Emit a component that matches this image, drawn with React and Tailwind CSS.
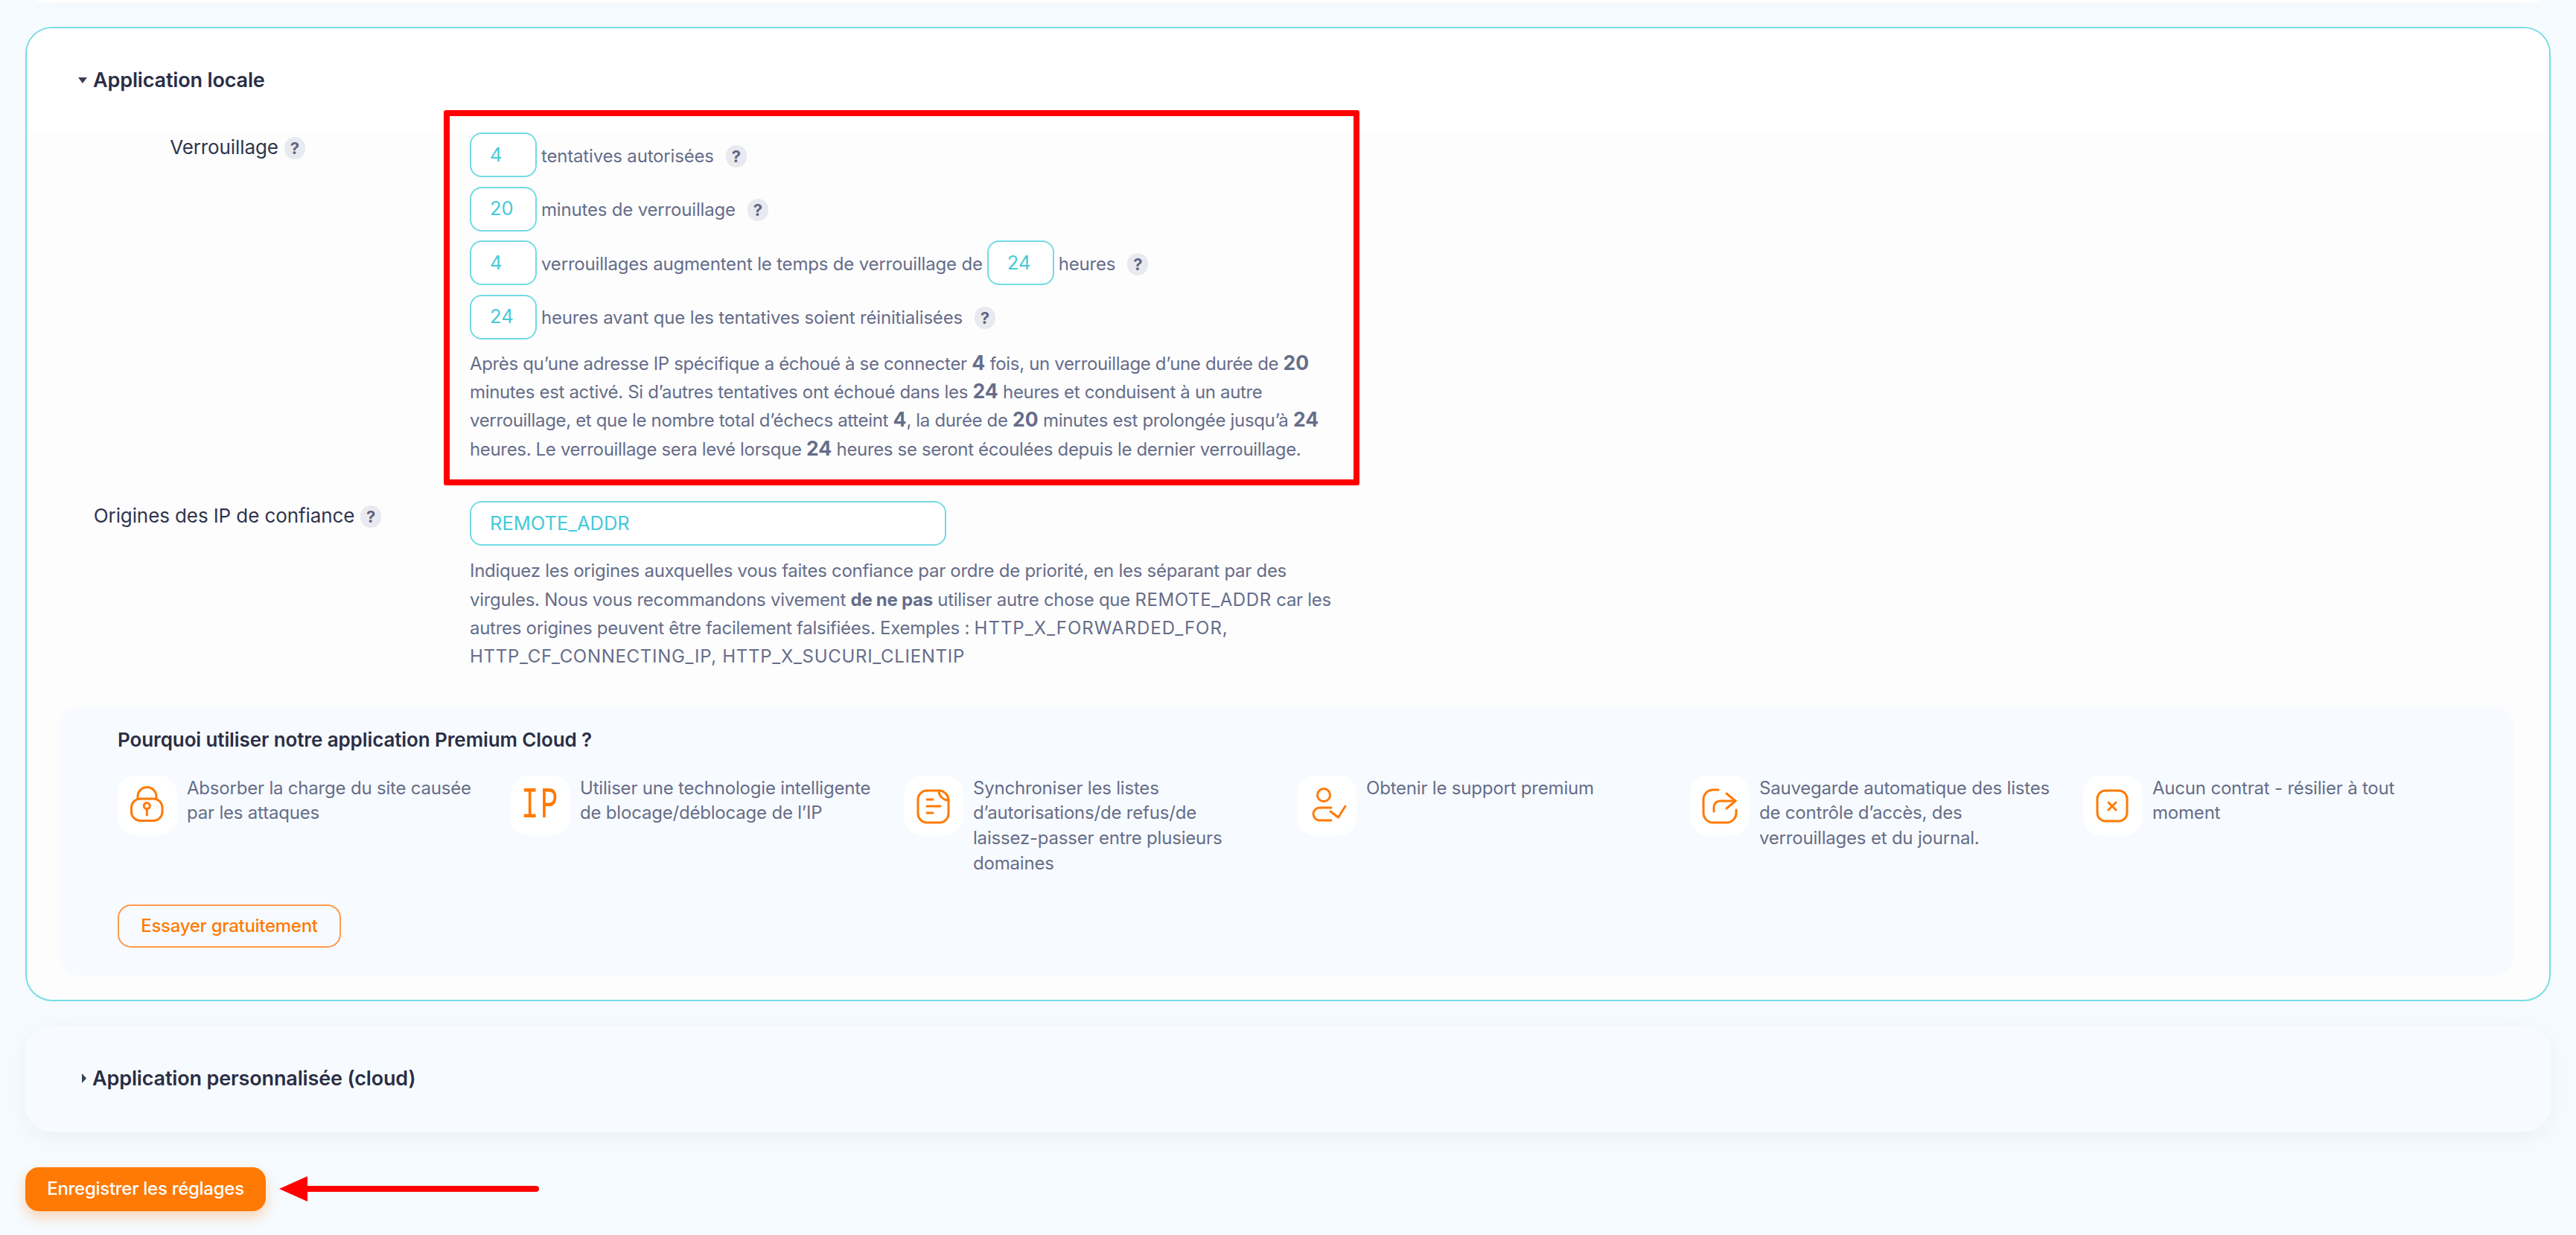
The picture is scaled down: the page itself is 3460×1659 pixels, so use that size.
import React from 'react';

const Help = ({ className = '' }) => (
  <span className={`inline-flex h-[30px] w-[28px] shrink-0 items-center justify-center rounded-full bg-[#e9eaf0] text-[22px] font-bold leading-none tracking-normal text-[#5f6580] ${className}`}>
    ?
  </span>
);

const Field = ({ value, className = 'w-[90px]' }) => (
  <span className={`flex h-[60px] shrink-0 items-center rounded-2xl border-2 border-[#72dbe3] bg-white pl-[25px] text-[25.5px] tracking-normal text-[#45c9d8] ${className}`}>
    {value}
  </span>
);

const Rule = ({ children }) => (
  <div className="flex h-[60px] items-center whitespace-nowrap tracking-[-0.18px]">{children}</div>
);

const Num = ({ children }) => <b className="text-[26.5px] leading-none tracking-normal">{children}</b>;

const icons = {
  lock: (
    <svg viewBox="0 0 80 80" className="h-20 w-20" fill="none" stroke="#ff7a05" strokeWidth="3" strokeLinecap="round">
      <rect x="18.5" y="31" width="41.5" height="29.5" rx="12" />
      <path d="M27 31V28a12.5 12.5 0 0 1 25 0V31" />
      <circle cx="39.3" cy="40.5" r="4" />
      <path d="M39.3 45V53" />
    </svg>
  ),
  doc: (
    <svg viewBox="0 0 80 80" className="h-20 w-20" fill="none" stroke="#ff7a05" strokeWidth="3" strokeLinecap="round">
      <path d="M47 20H31A12 12 0 0 0 19 32V51A12 12 0 0 0 31 63H48A12 12 0 0 0 60 51V33" />
      <path d="M47 20A13 13 0 0 0 60 33M47 20C54 20 60 26 60 33" />
      <path d="M31 32H39M31 41H49M31 50H39" />
    </svg>
  ),
  user: (
    <svg viewBox="0 0 80 80" className="h-20 w-20" fill="none" stroke="#ff7a05" strokeWidth="3" strokeLinecap="round" strokeLinejoin="round">
      <circle cx="36" cy="26" r="8.5" />
      <path d="M46 43H30.5a8.5 8.5 0 0 0 0 17H46" />
      <path d="M45 48L55.5 56L65 41" />
    </svg>
  ),
  share: (
    <svg viewBox="0 0 80 80" className="h-20 w-20" fill="none" stroke="#ff7a05" strokeWidth="3" strokeLinecap="round" strokeLinejoin="round">
      <path d="M38 19H31A13 13 0 0 0 18 32V50A13 13 0 0 0 31 63H49A13 13 0 0 0 62 50V46" />
      <path d="M49 24L61 34L49 44" />
      <path d="M61 34H40A8 8 0 0 0 32 42V48" />
    </svg>
  ),
  cross: (
    <svg viewBox="0 0 80 80" className="h-20 w-20" fill="none" stroke="#ff7a05" strokeWidth="3" strokeLinecap="round">
      <rect x="19" y="20" width="40" height="41" rx="11" />
      <path d="M34 36L44 46M44 36L34 46" />
    </svg>
  ),
};

const features = [
  { icon: icons.lock, lines: ['Absorber la charge du site causée', 'par les attaques'] },
  {
    icon: <span className="scale-x-[0.65] font-['Liberation_Mono'] text-[60px] font-normal leading-none tracking-[4px] text-[#ff7a05]">IP</span>,
    lines: ['Utiliser une technologie intelligente', 'de blocage/déblocage de l’IP'],
  },
  { icon: icons.doc, lines: ['Synchroniser les listes', 'd’autorisations/de refus/de', 'laissez-passer entre plusieurs', 'domaines'] },
  { icon: icons.user, lines: ['Obtenir le support premium'] },
  { icon: icons.share, lines: ['Sauvegarde automatique des listes', 'de contrôle d’accès, des', 'verrouillages et du journal.'] },
  { icon: icons.cross, lines: ['Aucun contrat - résilier à tout', 'moment'] },
];

export default function App() {
  return (
    <div className="h-[1659px] overflow-hidden bg-[#f6fbff] px-[34px] font-['Inter',sans-serif] text-[24px] tracking-[-0.28px] text-[#666d89]">
      {/* bottom edge of the previous card */}
      <div className="mx-[16px] h-[3px] rounded-b-3xl bg-white shadow-[0_8px_24px_rgba(90,110,140,0.08)]" />

      {/* Local application */}
      <section className="mt-[33px] overflow-hidden rounded-[36px] border-2 border-[#7adde4] bg-[#fdfdfe]">
        <div className="flex h-[140px] items-center bg-white pl-[69px]">
          <svg viewBox="0 0 12 8" className="mr-[8px] h-2 w-3" fill="#3a3f55">
            <path d="M0 0H12L6 8Z" />
          </svg>
          <h2 className="text-[27px] font-semibold tracking-[-0.15px] text-[#2a2e45]">Application locale</h2>
        </div>

        <div className="flex">
          <div className="mr-[29px] flex h-[60px] w-[566px] items-start justify-center gap-2 text-[26px] tracking-[-0.1px] text-[#30354b]">
            Verrouillage <Help className="mt-[6px]" />
          </div>
          <div className="relative">
            <div className="flex flex-col gap-[12.5px]">
              <Rule>
                <Field value="4" />
                <span className="ml-[6px] mt-[3px]">tentatives autorisées</span>
                <Help className="ml-[16px] mt-[3px]" />
              </Rule>
              <Rule>
                <Field value="20" />
                <span className="ml-[6px] mt-[3px]">minutes de verrouillage</span>
                <Help className="ml-[16px] mt-[3px]" />
              </Rule>
              <Rule>
                <Field value="4" />
                <span className="ml-[6px] mt-[3px]">verrouillages augmentent le temps de verrouillage de</span>
                <Field value="24" className="ml-[6px] w-[90px]" />
                <span className="ml-[6px] mt-[3px]">heures</span>
                <Help className="ml-[16px] mt-[3px]" />
              </Rule>
              <Rule>
                <Field value="24" />
                <span className="ml-[6px] mt-[3px]">heures avant que les tentatives soient réinitialisées</span>
                <Help className="ml-[16px] mt-[3px]" />
              </Rule>
            </div>
            <div className="mt-[14px] whitespace-nowrap leading-[38.4px] tracking-[-0.34px]">
              <div>Après qu’une adresse IP spécifique a échoué à se connecter <Num>4</Num> fois, un verrouillage d’une durée de <Num>20</Num></div>
              <div>minutes est activé. Si d’autres tentatives ont échoué dans les <Num>24</Num> heures et conduisent à un autre</div>
              <div>verrouillage, et que le nombre total d’échecs atteint <Num>4</Num>, la durée de <Num>20</Num> minutes est prolongée jusqu’à <Num>24</Num></div>
              <div>heures. Le verrouillage sera levé lorsque <Num>24</Num> heures se seront écoulées depuis le dernier verrouillage.</div>
            </div>
            {/* red annotation frame */}
            <div className="pointer-events-none absolute left-[-35px] top-[-30px] h-[504px] w-[1230px] rounded-[3px] border-[8px] border-[#ff0000]" />
          </div>
        </div>

        <div className="mt-[50px] flex">
          <div className="mr-[29px] flex w-[566px] items-start justify-center gap-2 text-[26px] tracking-[-0.1px] text-[#30354b]">
            Origines des IP de confiance <Help className="mt-[6px]" />
          </div>
          <div>
            <Field value="REMOTE_ADDR" className="w-[640px]" />
            <div className="mt-[15px] whitespace-nowrap leading-[38.4px]">
              <div>Indiquez les origines auxquelles vous faites confiance par ordre de priorité, en les séparant par des</div>
              <div>virgules. Nous vous recommandons vivement <b>de ne pas</b> utiliser autre chose que <span className="tracking-[0.6px]">REMOTE_ADDR</span> car les</div>
              <div>autres origines peuvent être facilement falsifiées. Exemples : <span className="tracking-[1px]">HTTP_X_FORWARDED_FOR,</span></div>
              <div className="tracking-[0.7px]">HTTP_CF_CONNECTING_IP, HTTP_X_SUCURI_CLIENTIP</div>
            </div>
          </div>
        </div>

        {/* Premium upsell */}
        <div className="mb-[32px] ml-[44px] mr-[47px] mt-[47px] rounded-[28px] bg-[#f7fbff] pb-[38px] pl-[78px] pt-[29px]">
          <h3 className="text-[26px] font-semibold leading-[32px] tracking-[-0.1px] text-[#2a2e45]">Pourquoi utiliser notre application Premium Cloud ?</h3>
          <div className="mt-[32px] flex h-[134px] tracking-[-0.2px]">
            {features.map((item, index) => (
              <div key={index} className="flex w-[528px] gap-[13px]">
                <div className="flex h-20 w-20 shrink-0 items-center justify-center rounded-3xl bg-white">{item.icon}</div>
                <div className="whitespace-nowrap leading-[33.6px]">
                  {item.lines.map((line) => (
                    <div key={line}>{line}</div>
                  ))}
                </div>
              </div>
            ))}
          </div>
          <button className="mt-[39px] flex h-[58px] w-[300px] items-center justify-center rounded-[18px] border-2 border-[#ff9a4d] font-medium text-[#ff7a05]">
            Essayer gratuitement
          </button>
        </div>
      </section>

      {/* Custom application */}
      <section className="mt-[33px] flex h-[142px] items-center rounded-[34px] bg-[#f7fbff] pl-[76px] shadow-[0_8px_30px_rgba(90,110,140,0.08)]">
        <svg viewBox="0 0 6 13" className="mr-[8px] h-[13px] w-[6px]" fill="#3a3f55">
          <path d="M0 0L6 6.5L0 13Z" />
        </svg>
        <h2 className="text-[27px] font-semibold tracking-[-0.15px] text-[#2a2e45]">Application personnalisée (cloud)</h2>
      </section>

      <div className="mt-[48px] flex items-center">
        <button className="flex h-[59px] w-[323px] items-center justify-center rounded-[18px] bg-[#ff7a05] font-medium text-white shadow-[0_8px_18px_rgba(255,122,5,0.3)]">
          Enregistrer les réglages
        </button>
        <svg viewBox="0 0 349 34" className="ml-[18px] h-[34px] w-[349px]">
          <path d="M0 17L38 0V34Z" fill="#ff0000" />
          <path d="M38 17H345" stroke="#ff0000" strokeWidth="8" strokeLinecap="round" />
        </svg>
      </div>
    </div>
  );
}
